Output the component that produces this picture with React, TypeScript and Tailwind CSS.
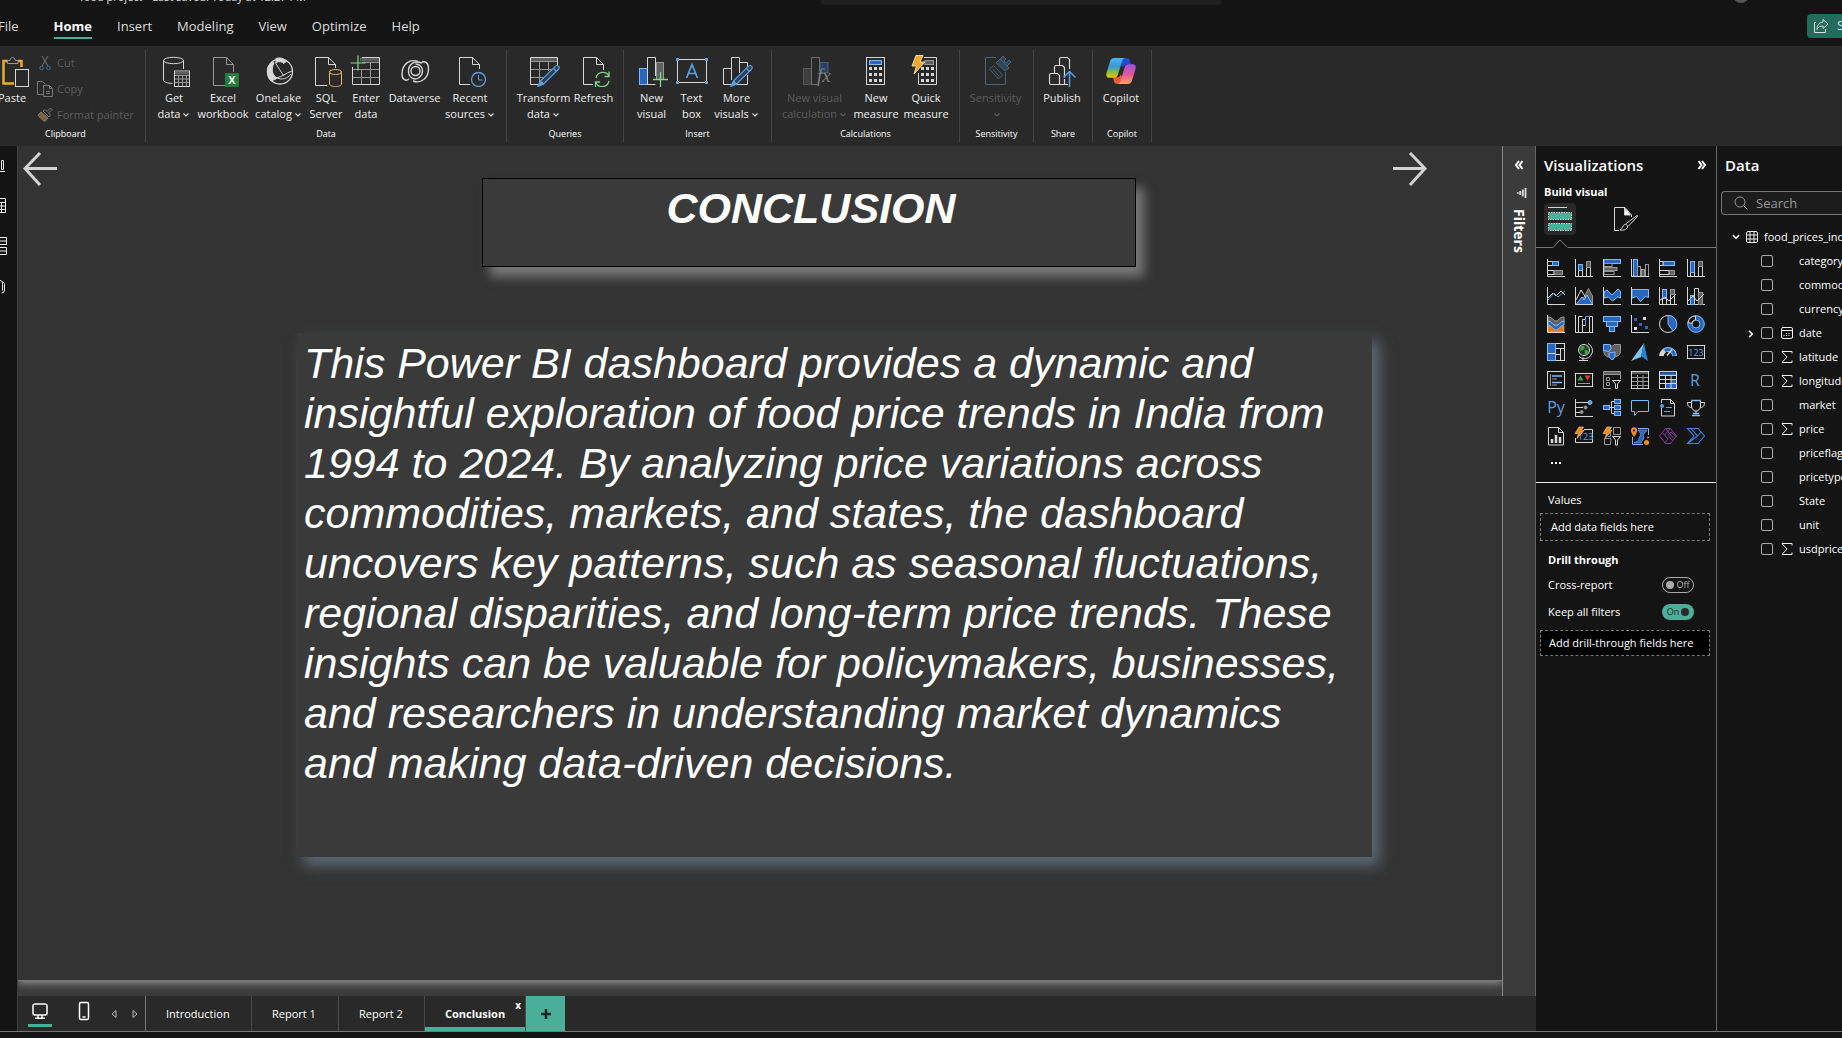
import type { ReactNode } from "react";

const W = "#d6d6d6";
const G = "#979797";
const DG = "#5f5f5f";
const B = "#2767c0";
const LB = "#7db9f2";
const SB = "#5a9fe0";
const BG = "#141414";

/* ---------- ribbon icons (32 x 32) ---------- */

function Icon32({ children, dim = false }: { children: ReactNode; dim?: boolean }) {
  return (
    <svg viewBox="0 0 32 32" fill="none" stroke={W} aria-hidden="true" className={dim ? "size-8 shrink-0 opacity-40" : "size-8 shrink-0"}>
      {children}
    </svg>
  );
}

function Pencil() {
  return (
    <g stroke={LB} strokeWidth="1.2">
      <path d="M12.5 26 27.5 11.2a2 2 0 0 1 3 0 2 2 0 0 1 0 3L15.5 29l-5.5 2z" fill="#29405c" stroke={SB} />
      <path d="m12.5 26 3 3-5 2z" fill={SB} stroke={SB} />
      <path d="m25.5 13.5 3 3" stroke={SB} />
    </g>
  );
}

function Keys({ x }: { x: number }) {
  return (
    <g fill={W} stroke="none">
      {[0, 1, 2].map((r) => [0, 1, 2].map((c) => <rect key={`${r}${c}`} x={x + c * 5} y={12 + r * 6} width="3" height="3" />))}
    </g>
  );
}

const ribbonIcons = {
  getData: (
    <Icon32>
      <ellipse cx="15.5" cy="5.5" rx="10" ry="3.2" />
      <path d="M5.5 5.5V25c0 2 4 3.3 9 3.5M25.5 5.5V14" />
      <rect x="16.5" y="16" width="15" height="15.5" />
      <path d="M17 18h14" stroke={DG} strokeWidth="3" />
      <path d="M17 20.500h14M17 24h14M17 27.500h14M20.500 20v11M24.500 20v11M28.500 20v11" stroke={G} />
    </Icon32>
  ),
  excel: (
    <Icon32>
      <path d="M18 30.500H6.500V2.500H19.500L26.500 9.500V17M19.500 2.500V9.500H26.500" stroke={G} />
      <rect x="18" y="18" width="14" height="14" fill="#217e3c" stroke="none" />
      <text x="25" y="29" fontSize="11" fontWeight="700" textAnchor="middle" fill="#fff" stroke="none">X</text>
    </Icon32>
  ),
  oneLake: (
    <Icon32>
      <circle cx="17" cy="16.500" r="12.500" strokeWidth="1.300" />
      <path d="M9 7C3 11 3 21 8 26c3-1 5-2 6-3-5-3-6-9-3-15zM13 3.500c4-1.500 8 0 10 3l-2 2c-2-2-5-2.500-8-1z" fill={W} />
      <path d="M12 7c3 5 6 10 9 14M14 23c5 2 10 1 14-4" />
      <path d="M13 23c6-1 10-5 16-7" />
    </Icon32>
  ),
  sql: (
    <Icon32>
      <path d="M17 30.500H5.500V2.500H18.500L25.500 9.500V13M18.500 2.500V9.500H25.500" />
      <g stroke="#f0b460" fill="#292929">
        <path d="M19.500 17V29c0 1.500 3 2.500 6 2.500s6-1 6-2.500V17" />
        <ellipse cx="25.500" cy="17" rx="6" ry="2.500" />
      </g>
    </Icon32>
  ),
  enterData: (
    <Icon32>
      <path d="M10 4.500h20" stroke={DG} strokeWidth="4" />
      <path d="M12 7.500h18M2 14.500h28M2 22.500h28M11.500 14v16M20.500 8v22" stroke={G} />
      <path d="M12 2.500H29.500V29.500H2.500V12" />
      <path d="M8 .5v15M.5 8h15" stroke="#7fd888" strokeWidth="1.200" />
    </Icon32>
  ),
  dataverse: (
    <Icon32>
      <g strokeWidth="1.400">
        <path d="M19 6.500C11 3.500 3 9 3 19c0 6 4 7.500 7 5" />
        <path d="M14 26c8 3 15.500-3 15.500-12 0-7-4-8.500-7.500-6" />
        <circle cx="16.500" cy="16" r="4.500" />
        <path d="M22.500 8C15 5 9 9.500 9.500 17c.5 6 6 8.500 10 6 3-2 4-4 4-7 0-4-3-7-7-7" />
      </g>
    </Icon32>
  ),
  recent: (
    <Icon32>
      <path d="M16 29.500H5.500V2.500H18.500L25.500 9.500V14M18.500 2.500V9.500H25.500" />
      <circle cx="24.500" cy="24.500" r="7" stroke={SB} strokeWidth="1.300" />
      <path d="M24.500 20v5h4" stroke={SB} />
    </Icon32>
  ),
  transform: (
    <Icon32>
      <path d="M2 4.500h28" stroke={DG} strokeWidth="4" />
      <path d="M2 6.500h28M2 14.500h25M2 22.500h14M11.500 7v20M20.500 7v9" stroke={G} />
      <path d="M29.500 10V2.500H2.500V29.500H11" />
      <Pencil />
    </Icon32>
  ),
  refresh: (
    <Icon32>
      <path d="M15 29.500H5.500V2.500H18.500L25.500 9.500V15M18.500 2.500V9.500H25.500" />
      <path d="M18 23a7 7 0 0 1 13-2M31 16.500V21.500H26.500M31 26a7 7 0 0 1-13 2M17.500 32V27H22" stroke="#7fd888" strokeWidth="1.300" />
    </Icon32>
  ),
  newVisual: (
    <Icon32>
      <rect x="3.500" y="13.500" width="8" height="16" fill={B} stroke={LB} />
      <rect x="20.500" y="7.500" width="7" height="17" fill={DG} stroke={G} />
      <path d="M19.500 29.500h-8v-27h8V21" />
      <path d="M24.500 17v15M17 24.500h15" stroke="#7fd888" strokeWidth="1.300" />
    </Icon32>
  ),
  textBox: (
    <Icon32>
      <rect x="1.500" y="4.500" width="29" height="23" />
      <path d="M10.500 23 16 9.500 21.500 23M12.500 18.500h7" stroke={SB} strokeWidth="1.700" />
      <g fill={SB} stroke="none">
        <rect x="0" y="3" width="3" height="3" />
        <rect x="29" y="3" width="3" height="3" />
        <rect x="0" y="26" width="3" height="3" />
        <rect x="29" y="26" width="3" height="3" />
      </g>
    </Icon32>
  ),
  moreVisuals: (
    <Icon32>
      <path d="M10 29.500H2.500V13.500h8M10.500 25V2.500h8V18M18.500 7.500h8V12M26.500 20v9.500H15" />
      <Pencil />
    </Icon32>
  ),
  newCalc: (
    <Icon32 dim>
      <rect x="4.500" y="13.500" width="8" height="16" fill={DG} stroke={G} />
      <rect x="21" y="7.500" width="8" height="10" fill={B} stroke={LB} />
      <path d="M18 29.500h-5.500v-27h8V16" />
      <text x="18" y="27" fontSize="19" fontStyle="italic" fill="#fff" stroke="none" className="font-['Liberation_Serif',serif]">fx</text>
    </Icon32>
  ),
  newMeasure: (
    <Icon32>
      <rect x="6.500" y="2.500" width="18" height="27" />
      <rect x="9.500" y="5.500" width="12" height="4" fill={B} stroke={LB} />
      <Keys x={9} />
    </Icon32>
  ),
  quickMeasure: (
    <Icon32>
      <path d="M14 2.500h12.500v27H8.500V18" />
      <rect x="15" y="5.500" width="8.500" height="4" fill={DG} stroke={G} />
      <Keys x={11} />
      <path d="M6 .5h7L10 7h5L4 19l2.500-8H2z" fill="#f0a830" stroke="#f8d9a0" />
    </Icon32>
  ),
  sensitivity: (
    <Icon32 dim>
      <g stroke="#7db9f2">
        <path d="M16 2.500H5.500v27h20V17" />
        <path d="m9.500 14 4-3.500 9 9.500-4 4zM12.500 14l7 7.500" />
        <path d="m16 8 4-4 9 9-4 3zM20 4l3-3 3 3-2 2 2 2 3-3 2 2-4 4" fill="#3f6c9a" />
      </g>
    </Icon32>
  ),
  publish: (
    <Icon32>
      <g strokeWidth="1.200">
        <path d="M22 29.500H5q-1.500 0-1.500-1.500v-8q0-1.500 1.500-1.500h6.500l2 2v9M8.500 18v-6q0-1.500 1.500-1.500h6.500l2 2v10M18.500 29.500V24M13.500 10V4q0-1.500 1.500-1.500h6.500l2 2V14" />
        <path d="M23.500 32V17M17.500 22.500l6-6 6 6" stroke={SB} strokeWidth="1.500" />
      </g>
    </Icon32>
  ),
  copilot: (
    <svg viewBox="0 0 32 32" className="size-8 shrink-0" aria-hidden="true">
      <defs>
        <linearGradient id="cpA" x1="0" y1="0" x2="0" y2="1">
          <stop offset="0" stopColor="#48b5f5" />
          <stop offset=".45" stopColor="#3a9ad0" />
          <stop offset=".7" stopColor="#7fc04a" />
          <stop offset="1" stopColor="#f5c400" />
        </linearGradient>
        <linearGradient id="cpB" x1="0" y1="0" x2="0" y2="1">
          <stop offset="0" stopColor="#a450ea" />
          <stop offset=".5" stopColor="#e0559c" />
          <stop offset="1" stopColor="#ffa060" />
        </linearGradient>
      </defs>
      <path d="M15 3h6.500c2 0 2.800 1 3.300 2.500L26 9.500h-4c-2.500 0-3.500 1-4 3L15 9z" fill="#1f4fd0" />
      <path d="M17 29h-4.500c-2 0-3-1-3.500-2.500L8 22.500h3c3 0 4-1 4.500-3l3 4z" fill="#ee5a3a" />
      <path d="M9 3h11c-2 .5-2.600 2-3.200 4l-4 13c-.7 2-1.800 2.800-4 2.800H4.500C1.500 22.800.8 20.500 1.500 18L5 6.500C5.700 4.300 7 3 9 3z" fill="url(#cpA)" />
      <path d="M23 29H12.500c2-.5 2.700-2 3.300-4l4-13c.6-2 1.700-2.800 4-2.800h3.700c3 0 3.700 2.300 3 4.800L27 25.500c-.7 2.200-2 3.500-4 3.500z" fill="url(#cpB)" />
    </svg>
  ),
};

/* ---------- visual gallery icons (18 x 18) ---------- */

const axis = <path d="M.5 0v17.500H18" />;
const bolt = <path d="M4 0h4.500L6.500 3.500H9L2 11.500 3.500 6.500H0z" fill="#f08a1c" stroke="#f9cf9a" strokeWidth=".6" />;

const gallery: [string, ReactNode][] = [
  ["Stacked bar chart", <>{axis}<path d="M1 2.500h4.500v4H1M1 11.500h6v4H1" /><rect x="5.500" y="2.500" width="6" height="4" fill={B} stroke={LB} /><rect x="7.500" y="11.500" width="8" height="4" fill={DG} stroke={G} /></>],
  ["Stacked column chart", <>{axis}<path d="M3.500 11v6M7.500 11v6M11.500 8v9M15.500 8v9" /><rect x="3.500" y="5.500" width="4" height="6" fill={B} stroke={LB} /><rect x="11.500" y="2.500" width="4" height="6" fill={DG} stroke={G} /></>],
  ["Clustered bar chart", <><rect x="1" y=".5" width="16.500" height="4" fill={B} stroke={LB} /><rect x="1" y="4.500" width="8" height="3" stroke={G} /><rect x="1" y="8.500" width="13" height="3" fill={DG} stroke={G} /><rect x="1" y="12.500" width="10" height="3" stroke={G} />{axis}</>],
  ["Clustered column chart", <><rect x="2.500" y=".5" width="4" height="17" fill={B} stroke={LB} /><rect x="6.500" y="7.500" width="3" height="10" stroke={G} /><rect x="10.500" y="10.500" width="3" height="7" fill={DG} stroke={G} /><rect x="14.500" y="5.500" width="3" height="12" stroke={G} />{axis}</>],
  ["100% stacked bar chart", <>{axis}<path d="M1 2.500h3v4H1M1 11.500h9v4H1" /><rect x="4.500" y="2.500" width="11" height="4" fill={B} stroke={LB} /><rect x="10.500" y="11.500" width="5" height="4" fill={DG} stroke={G} /></>],
  ["100% stacked column chart", <>{axis}<path d="M3.500 13v4M7.500 13v4M11.500 8v9M15.500 8v9" /><rect x="3.500" y="2.500" width="4" height="11" fill={B} stroke={LB} /><rect x="11.500" y="2.500" width="4" height="5" fill={DG} stroke={G} /></>],
  ["Line chart", <>{axis}<path d="m1 11 5-5 3 3 5-5 4 4" /><path d="m1 13 6-7 4 4 7-6" stroke={SB} /></>],
  ["Area chart", <><path d="M8 12 13.500 1.500 17.500 9v8" fill={DG} stroke={G} /><path d="m1 13 5-10 5 8" /><path d="M1 17.500 7 10l2 3 3-5 5.500 9.500z" fill={B} stroke={LB} />{axis}</>],
  ["Stacked area chart", <><path d="m1 5 3-2 5 5 6-6 2.500 2v7l-3-1-5 4-4-4L1 11z" fill={B} stroke={LB} />{axis}</>],
  ["100% stacked area chart", <><path d="M1 2.500h16.500v8l-3-1-5 5-4-5L1 11z" fill={B} stroke={LB} />{axis}</>],
  ["Line and stacked column chart", <>{axis}<path d="M3.500 9v8M7.500 9v8M11.500 8v9M15.500 8v9" /><rect x="3.500" y="2.500" width="4" height="9" fill={B} stroke={LB} /><rect x="11.500" y="2.500" width="4" height="5" fill={DG} stroke={G} /><path d="m1 13 5-3 4 4 7-7" /></>],
  ["Line and clustered column chart", <>{axis}<rect x="3.500" y="8.500" width="4" height="9" fill={B} stroke={LB} /><path d="M7.500 17V1.500h4V17" /><rect x="11.500" y="5.500" width="4" height="12" fill={DG} stroke={G} /><path d="m1 14 5-5 4 5 7-7" /></>],
  ["Ribbon chart", <><path d="M1 2c5 0 5 4 8 4s3-4 8-4v5c-4 0-5 3-8 3S5 7 1 7z" fill={DG} stroke={G} /><path d="M1 11c5 0 5 2 8 2s4-2 8-2v6H1z" fill="#e07b12" stroke="#f0b060" strokeWidth=".6" /><path d="M1 6c4 0 5 5 8 5s4-5 8-5v4c-4 0-5 5-8 5s-4-5-8-5z" fill={B} stroke={LB} />{axis}</>],
  ["Waterfall chart", <>{axis}<path d="M3.500 17V1.500h4M7.500 17V4.500h3v6h-3M14.500 17V1.500h3V17" /><path d="M10.500 11V1.500h4" stroke={SB} /></>],
  ["Funnel chart", <g fill={B} stroke={LB}><rect x=".5" y="1.500" width="17" height="5" /><rect x="3.500" y="6.500" width="11" height="5" /><rect x="6.500" y="11.500" width="5" height="5" /></g>],
  ["Scatter chart", <>{axis}<g stroke="none"><path d="M3 3h3v3H3zM8 8h3v3H8zM14 11h3v3h-3z" fill={B} /><path d="M12 2h3v3h-3zM3 12h3v3H3z" fill={W} /></g></>],
  ["Pie chart", <><circle cx="9" cy="9" r="8.500" /><path d="M9 .5A8.500 8.500 0 0 1 14 16L9 9z" fill={B} stroke={LB} /></>],
  ["Donut chart", <><circle cx="9" cy="9" r="6.300" stroke={B} strokeWidth="4" /><circle cx="9" cy="9" r="8.300" stroke={LB} /><circle cx="9" cy="9" r="4" stroke={LB} /><path d="M8.500 1A8 8 0 0 0 1 7.500l4 1C5 6.500 6.500 5 8.500 5z" fill={BG} /></>],
  ["Treemap", <><rect x=".5" y=".5" width="17" height="17" /><rect x=".5" y=".5" width="8" height="17" fill={B} stroke={LB} /><path d="M8.500 5.500h9M13.500 6v11M8.500 11.500h5M.5 10.500h8" /></>],
  ["Map", <><circle cx="9" cy="7" r="5.500" fill="#1b3b22" /><path d="M6 3c3 0 4 2 3 3s-3 1-4 2zM10 7l3 1-1 3-2 0zM11 3l2 2" fill="#3f9d4d" stroke="#3f9d4d" strokeWidth=".6" /><path d="M13 .5a8 8 0 1 1-9 13M8 14.500v3M4 17.500h9" /></>],
  ["Filled map", <><path d="M.5 1.500H7l2 2 2-2h6.500v6c0 5-3 6-5 6l-3 3.500-3-3C2 14 .5 10 .5 7z" fill={DG} stroke={G} /><path d="M.5 1.500H7l1 4-2 3-5.500-1zM9 17l-3-3 0-4 6-1 0 5z" fill={B} stroke={LB} /></>],
  ["Azure map", <g stroke="none"><path d="M13 0 0 18l10-4z" fill="#7fc8ec" /><path d="m13 0 4 18-7-5z" fill="#2a7fd0" /></g>],
  ["Gauge", <><path d="M2.500 13A6.500 6.500 0 0 1 15.500 13" stroke={W} strokeWidth="4.500" /><path d="M5 7.800A6.500 6.500 0 0 1 15.500 13" stroke={LB} strokeWidth="4.500" /><path d="M6 7.500A6.500 6.500 0 0 1 15.500 12.500" stroke={B} strokeWidth="2.800" /><path d="M8 12.500 13 6.500" stroke={W} strokeWidth="1.500" /></>],
  ["Card", <><rect x=".5" y="2.500" width="17" height="13" /><text x="9" y="12.500" fontSize="9" textAnchor="middle" fill={SB} stroke="none">123</text></>],
  ["Multi-row card", <><rect x=".5" y=".5" width="17" height="17" /><path d="M3.500 3v12" stroke={G} /><path d="M5 5h10M5 11.500h10" stroke={LB} strokeWidth="1.600" /><path d="M5 8h5M5 14h5" stroke={G} /></>],
  ["KPI", <><rect x=".5" y="2.500" width="17" height="13" /><path d="M3 12.500h12" stroke={G} /><path d="m2.500 9.500 3-5 3 5z" fill="#3f9d4d" stroke="none" /><path d="m9.500 4.500 3 5 3-5z" fill="#e03c31" stroke="none" /></>],
  ["Slicer", <><path d="M1 1.500h16" stroke={DG} strokeWidth="3" /><path d="M8 17.500H.5V.5h17V8M1 3.500h16" stroke={G} /><path d="M3.500 6.500h3v3h-3zM3.500 11.500h3v3h-3z" stroke={G} /><path d="M9.500 9.500h8l-3 3.500v4.500h-2V13z" fill={BG} /></>],
  ["Table", <><path d="M1 6.500h16M1 10.500h16M1 14.500h16M6.500 4v13M12 4v13" stroke={G} /><path d="M1 2h16" stroke={DG} strokeWidth="2" /><rect x=".5" y=".5" width="17" height="17" /></>],
  ["Matrix", <><path d="M1 3h16" stroke={B} strokeWidth="3" /><path d="M12 8h5v9H6v-5h6z" fill={B} stroke="none" /><path d="M1 4.500h16M1 8.500h16M1 12.500h16M6.500 4v13M12 4v13" /><rect x=".5" y=".5" width="17" height="17" /></>],
  ["R script visual", <text x="8" y="14.500" fontSize="16" fontWeight="500" textAnchor="middle" fill={SB} stroke="none">R</text>],
  ["Python visual", <text x="9" y="13.500" fontSize="16" textAnchor="middle" fill={SB} stroke="none">Py</text>],
  ["Key influencers", <>{axis}<path d="M1 3.500h12M1 8.500h7M1 13.500h4" /><circle cx="15" cy="3.500" r="2" fill={SB} stroke={LB} /><circle cx="10.500" cy="8.500" r="1.500" fill={G} stroke={G} /><circle cx="6.500" cy="13" r="1.500" fill={G} stroke={G} /></>],
  ["Decomposition tree", <><path d="M7 8.500h5M11 2.500H8.500v12H11" /><g fill={B} stroke={LB}><rect x=".5" y="6.500" width="6" height="4" /><rect x="11.500" y=".5" width="6" height="4" /><rect x="11.500" y="6.500" width="6" height="4" /><rect x="11.500" y="12.500" width="6" height="4" /></g></>],
  ["Q&A", <path d="M.5 1.500h17v11H7L3.500 16.500v-4h-3z" stroke={LB} />],
  ["Narrative", <><path d="M2.500 4V.5h9l4 4v12.500h-13V9M11.500.5v4h4" /><circle cx="3" cy="7" r="2" fill={SB} stroke="none" /><path d="M7 8.500h6M5 12.500h6" stroke={SB} /></>],
  ["Metrics", <><path d="M4.500 1v6c0 3 2 5 4.500 5s4.500-2 4.500-5V1M4.500 3.500h-4c0 4 2 5 4.500 5M13.500 3.500h4c0 4-2 5-4.500 5M9 12v3" /><path d="M4 1.500h10M5 16.500h8M6 14.500h6" stroke={LB} strokeWidth="1.500" /></>],
  ["Paginated report", <><path d="M1.500.5h10l5 5v12.500h-15zM11.500.5v5h5" /><path d="M5 16v-4M9 16V8M13 16v-6" strokeWidth="2.500" /></>],
  ["Card (new)", <><path d="M9 2.500h8.500v13H.5V11" /><text x="10.500" y="13" fontSize="9" textAnchor="middle" fill={SB} stroke="none">123</text>{bolt}</>],
  ["Slicer (new)", <><path d="M10.500.5h7v7h-7zM8 11.500H1.500v6h6z" stroke={G} /><path d="M5 9.500h2.500v-4" stroke={SB} /><path d="M9.500 9.500h8l-3 3.500v5h-2v-5z" fill={BG} />{bolt}</>],
  ["ArcGIS Maps", <><path d="M7 1.500h10.500V8M12 17.500H1.500V10" stroke={LB} /><path d="M7 3h9l-4 5 1 3-3 5H3c2-2 5-1 5-5l2-4z" fill={B} stroke={LB} strokeWidth=".6" /><path d="M3 .2C.5.200 0 2 0 3.500 0 6 3 10 3 10s3.200-4 3.200-6.500C6.200 2 5.500.200 3 .200z" fill="#f08a1c" stroke="none" /><circle cx="3" cy="3.500" r="1" fill={BG} stroke="none" /><circle cx="15.500" cy="15.500" r="2.500" fill="#f08a1c" stroke="none" /><circle cx="17" cy="10.500" r="1" fill="#f08a1c" stroke="none" /></>],
  ["Power Apps", <g stroke="#8d3aa0"><path d="M6.500 1.500h5L17.500 9l-6 7.500h-5L.5 9zM3.500 5.500 9 12l-3.500 4M11.500 1.500 5.500 8M6.500 1.500l8 10M17 9.500 12 5 9 8.500l4.500 5" /></g>],
  ["Power Automate", <g stroke="#3b84ea" strokeWidth="1.100"><path d="M.5 1.500H11L17.500 9 11 16.500H.5L7 9zM4 1.500 10.500 9 .5 16.500M10.500 9 14 5" /></g>],
];

/* ---------- shared parts ---------- */

function Chevron({ className = "" }: { className?: string }) {
  return (
    <svg viewBox="0 0 8 8" className={"inline-block size-2 " + className} fill="none" stroke="currentColor" strokeWidth="1.200" aria-hidden="true">
      <path d="M1.500 2.500 4 5l2.500-2.500" />
    </svg>
  );
}

type Cmd = { icon: ReactNode; lines: string[]; arrow?: boolean; w: string; dim?: boolean };

function RibbonGroup({ name, width, cmds }: { name: string; width: string; cmds: Cmd[] }) {
  return (
    <section aria-label={name} className={"my-1 flex shrink-0 flex-col border-r border-[#444] " + width}>
      <div className="mt-[5px] flex h-[67px] justify-center pr-0.5">
        {cmds.map((c) => (
          <button key={c.lines.join(" ")} disabled={c.dim} className={"flex flex-col items-center whitespace-nowrap text-[11px] leading-4 " + c.w + (c.dim ? " text-[#5c5c5c]" : " text-[#eee]")}>
            {c.icon}
            <span className="mt-[3px]">{c.lines[0]}</span>
            <span>
              {c.lines[1]}
              {c.arrow && <Chevron className="ml-0.5" />}
            </span>
          </button>
        ))}
      </div>
      <h2 className="mt-1 text-center text-[9px] leading-4 text-white">{name}</h2>
    </section>
  );
}

function Ribbon() {
  const i = ribbonIcons;
  return (
    <div className="flex h-[100px] overflow-hidden bg-[#292929]">
      <section aria-label="Clipboard" className="my-1 flex w-[146px] shrink-0 flex-col border-r border-[#444]">
        <div className="mt-[5px] flex h-[67px]">
          <button className="flex w-[37px] flex-col items-start text-[11px] leading-4 text-[#eee]">
            <svg viewBox="0 0 32 32" className="size-8" fill="none" aria-hidden="true">
              <path d="M8 6H3.500v22.500H14M18 6h3.500v6" stroke="#f0a830" strokeWidth="2.500" />
              <path d="M7.500 8.500v-3H10c0-4 5-4 5 0h3v3z" stroke={G} fill="#292929" />
              <rect x="15.500" y="14.500" width="13" height="17" stroke={W} fill="#292929" />
            </svg>
            <span className="-ml-0.5 mt-[3px]">Paste</span>
          </button>
          <div className="flex flex-col text-[11px] leading-4 text-[#5c5c5c]">
            <button disabled className="flex h-[26px] shrink-0 items-start gap-1">
              <svg viewBox="0 0 16 16" className="size-4" fill="none" aria-hidden="true">
                <path d="m5 1 6 10M11 1 5 11" stroke="#777" />
                <circle cx="4.500" cy="13" r="1.800" stroke="#3f6c9a" />
                <circle cx="11.500" cy="13" r="1.800" stroke="#3f6c9a" />
              </svg>
              Cut
            </button>
            <button disabled className="flex h-[26px] shrink-0 items-start gap-1">
              <svg viewBox="0 0 16 16" className="size-4" fill="none" stroke="#777" aria-hidden="true">
                <path d="M6 13.500H.5V.5h5l3 3" />
                <path d="M6.500 4.500h6l3 3v8h-9zM12.500 4.500v3h3M9 10.500h4M9 12.500h4" />
              </svg>
              Copy
            </button>
            <button disabled className="flex h-[26px] shrink-0 items-start gap-1 whitespace-nowrap">
              <svg viewBox="0 0 16 16" className="size-4" fill="none" stroke="#777" aria-hidden="true">
                <path d="m1 8 3-3 7 6-3 3.500C5 13 3 11 1 8z" fill="#7d6434" />
                <path d="m6 4 6 6 1.500-2-2-2L15 2.500l-1.500-1.500L10 4.500l-2-2z" />
              </svg>
              Format painter
            </button>
          </div>
        </div>
        <h2 className="mt-1 pl-[45px] text-[9px] leading-4 text-white">Clipboard</h2>
      </section>
      <RibbonGroup name="Data" width="w-[361px]" cmds={[
        { icon: i.getData, lines: ["Get", "data"], arrow: true, w: "w-[46px]" },
        { icon: i.excel, lines: ["Excel", "workbook"], w: "w-[52px]" },
        { icon: i.oneLake, lines: ["OneLake", "catalog"], arrow: true, w: "w-[59px]" },
        { icon: i.sql, lines: ["SQL", "Server"], w: "w-[36px]" },
        { icon: i.enterData, lines: ["Enter", "data"], w: "w-[44px]" },
        { icon: i.dataverse, lines: ["Dataverse"], w: "w-[53px]" },
        { icon: i.recent, lines: ["Recent", "sources"], arrow: true, w: "w-[58px]" },
      ]} />
      <RibbonGroup name="Queries" width="w-[117px]" cmds={[
        { icon: i.transform, lines: ["Transform", "data"], arrow: true, w: "w-[59px]" },
        { icon: i.refresh, lines: ["Refresh"], w: "w-[41px]" },
      ]} />
      <RibbonGroup name="Insert" width="w-[148px]" cmds={[
        { icon: i.newVisual, lines: ["New", "visual"], w: "w-[40px]" },
        { icon: i.textBox, lines: ["Text", "box"], w: "w-[40px]" },
        { icon: i.moreVisuals, lines: ["More", "visuals"], arrow: true, w: "w-[50px]" },
      ]} />
      <RibbonGroup name="Calculations" width="w-[188px]" cmds={[
        { icon: i.newCalc, lines: ["New visual", "calculation"], arrow: true, w: "w-[70px]", dim: true },
        { icon: i.newMeasure, lines: ["New", "measure"], w: "w-[53px]" },
        { icon: i.quickMeasure, lines: ["Quick", "measure"], w: "w-[47px]" },
      ]} />
      <RibbonGroup name="Sensitivity" width="w-[74px]" cmds={[{ icon: i.sensitivity, lines: ["Sensitivity", ""], arrow: true, w: "w-[60px]", dim: true }]} />
      <RibbonGroup name="Share" width="w-[59px]" cmds={[{ icon: i.publish, lines: ["Publish"], w: "w-[50px]" }]} />
      <RibbonGroup name="Copilot" width="w-[59px]" cmds={[{ icon: i.copilot, lines: ["Copilot"], w: "w-[50px]" }]} />
    </div>
  );
}

function TopBar() {
  const tabs = ["File", "Home", "Insert", "Modeling", "View", "Optimize", "Help"];
  return (
    <header>
      <div className="flex h-[5px] items-end justify-between overflow-hidden pl-20 pr-[93px] text-[11px] leading-4 text-[#ddd]">
        <span className="w-[741px] shrink-0 whitespace-nowrap">food project • Last saved: Today at 12:27 PM</span>
        <span className="h-4 w-[400px] shrink-0 rounded-sm bg-[#1f1f1f]" />
        <span className="mb-0.5 ml-auto size-4 rounded-full bg-[#555]" />
      </div>
      <div className="flex h-[41px] items-start justify-between">
        <nav className="flex gap-[25px] pt-2.5 text-[13px] leading-[22px] text-[#ddd]">
          {tabs.map((t) => (
            <a key={t} href="#" className={t === "Home" ? "border-b-2 border-[#4bae98] font-bold text-white" : t === "File" ? "-ml-0.5 mr-2.5" : ""}>
              {t}
            </a>
          ))}
        </nav>
        <button className="mt-[9px] flex h-6 w-[35px] items-center gap-2 overflow-hidden rounded-l bg-[#236b5c] pl-1.5 text-[13px] text-[#ddd]">
          <svg viewBox="0 0 16 16" className="size-4 shrink-0" fill="none" stroke="currentColor" aria-hidden="true">
            <path d="M3 4.500H1.500v10h11V11" />
            <path d="M10 1.500 15 6l-5 4.500V8C7 8 5 9 4 11.500c0-4 2-7 6-7.500z" />
          </svg>
          Share
        </button>
      </div>
    </header>
  );
}

function Rail() {
  const views: [string, ReactNode][] = [
    ["Report view", <path d="M1.500 2.500h2v9h-2zM0 13.500h5" />],
    ["Table view", <path d="M0 1.500h5.500v14H0M0 5.500h5M0 9h5M0 12.500h5M1.500 5v10" />],
    ["Model view", <path d="M0 1.500h6.500v7H0M0 5h6M0 11.500h6.500v7H0M0 15h6" />],
    ["DAX query view", <path d="M0 5.500c2 0 2.500 1.500 2.500 4v6M2 7c2.500 0 2.500 2 2.500 4v4q0 3-3 3" />],
  ];
  return (
    <nav aria-label="Views" className="flex w-[18px] shrink-0 flex-col gap-5 border-r border-[#3f3f3f] bg-[#141414] pt-3">
      {views.map(([n, d]) => (
        <button key={n} aria-label={n} className="h-[19px] w-3">
          <svg viewBox="0 0 12 19" className="h-[19px] w-3" fill="none" stroke="#eee">
            {d}
          </svg>
        </button>
      ))}
    </nav>
  );
}

function Arrow({ flip = false }: { flip?: boolean }) {
  return (
    <button aria-label={flip ? "Next page" : "Previous page"} className="h-[34px] w-[34px]">
      <svg viewBox="0 0 34 34" className={flip ? "size-full -scale-x-100" : "size-full"} fill="none" stroke="#d4d2d0" strokeWidth="3">
        <path d="M17 1 2 16.500 17 33M2 16.500h32" />
      </svg>
    </button>
  );
}

function Canvas() {
  return (
    <main className="flex min-w-0 grow flex-col overflow-hidden bg-[#3b3b3b] pb-[15px] font-['Liberation_Sans',Arial,sans-serif]">
      <div className="grow border-b border-[#777] bg-[#333] pt-1.5 shadow-[0_2px_8px_#999]">
        <div className="grid grid-cols-[34px_425fr_654fr_257fr_34px] pl-[5px] pr-[75px]">
          <Arrow />
          <span />
          <h1 className="mt-[26px] h-[89px] border border-black bg-[#3a3a3a] pl-1 pt-1 text-center text-[43px] font-bold italic leading-[50px] text-white shadow-[8px_10px_10px_#777]">
            CONCLUSION
          </h1>
          <span />
          <Arrow flip />
        </div>
        <div className="mt-[66px] grid grid-cols-[279fr_1075fr_130fr]">
          <p className="col-start-2 h-[524px] bg-[#3a3a3a] pl-[7px] pr-5 pt-[5px] text-[43px] italic leading-[50px] text-white shadow-[7px_8px_14px_#606d79]">
            This Power BI dashboard provides a dynamic and insightful exploration of food price trends in India from 1994 to 2024. By analyzing price variations across commodities, markets, and states, the dashboard uncovers key patterns, such as seasonal fluctuations, regional disparities, and long-term price trends. These insights can be valuable for policymakers, businesses, and researchers in understanding market dynamics and making data-driven decisions.
          </p>
        </div>
      </div>
    </main>
  );
}

function FiltersPane() {
  return (
    <aside className="flex w-[34px] shrink-0 flex-col items-center border-x border-[#8a8a8a] border-r-[#666] bg-[#3b3b3b] text-white">
      <button aria-label="Expand filters" className="mt-3.5 h-[10px]">
        <svg viewBox="0 0 10 10" className="size-[10px]" fill="none" stroke="currentColor" strokeWidth="2">
          <path d="M5 1 2 5l3 4M8.500 1l-3 4 3 4" />
        </svg>
      </button>
      <svg viewBox="0 0 10 10" className="ml-1.5 mt-[18px] size-[10px]" fill="none" stroke="#ddd" strokeWidth="1.800" aria-hidden="true">
        <path d="M8.500 0v10M5.800 1.500v7M3.200 3v4M.8 4.200v1.600" />
      </svg>
      <h2 className="mt-[11px] text-sm font-bold leading-4 [writing-mode:vertical-rl]">Filters</h2>
    </aside>
  );
}

function Toggle({ label, on }: { label: string; on: boolean }) {
  return (
    <label className="flex h-[27px] items-center justify-between pl-3 pr-[22px]">
      {label}
      <input type="checkbox" role="switch" defaultChecked={on} className="sr-only" />
      <span className={"flex h-4 w-8 items-center justify-center gap-0.5 rounded-full text-[9px] " + (on ? "bg-[#4bae98] text-[#222]" : "border border-[#aaa] text-[#aaa]")}>
        {on && "On"}
        <span className={"size-2 rounded-full " + (on ? "bg-[#292929]" : "bg-[#aaa]")} />
        {!on && "Off"}
      </span>
    </label>
  );
}

function Visualizations() {
  return (
    <aside className="flex w-[181px] shrink-0 flex-col border-r border-[#666] bg-[#141414] text-[11px] leading-4 text-white">
      <div className="flex items-center justify-between pl-2 pr-[9px] pt-2">
        <h2 className="text-[15px] font-semibold leading-[22px]">Visualizations</h2>
        <button aria-label="Collapse pane">
          <svg viewBox="0 0 10 10" className="size-[10px]" fill="none" stroke="currentColor" strokeWidth="2">
            <path d="m1.500 1 3 4-3 4M5 1l3 4-3 4" />
          </svg>
        </button>
      </div>
      <h3 className="mt-2 pl-2 font-bold">Build visual</h3>
      <div className="mt-[3px] flex gap-[34px] pl-2">
        <button aria-label="Build visual" className="flex size-8 items-center justify-center rounded-sm bg-[#292929]">
          <svg viewBox="0 0 24 24" className="size-6" fill="none">
            <path d="M0 .5h19" stroke={W} />
            <rect x=".5" y="5.500" width="23" height="7" fill="#4bae98" stroke="#ddd" strokeDasharray="1.500 1" />
            <rect x=".5" y="16.500" width="23" height="7" fill="#4bae98" stroke="#ddd" strokeDasharray="1.500 1" />
          </svg>
        </button>
        <button aria-label="Format visual" className="flex size-8 items-center justify-center">
          <svg viewBox="0 0 24 24" className="size-6" fill="none" stroke={W}>
            <path d="M5 23.500H.5V.5H11L17.500 8v2" />
            <path d="M10.500 1v7h6z" fill="#fff" />
            <path d="M6 23c2-1 2-2 3-4s4-2 4.500 0c.5 3-4 5-7.500 4zM11.500 17 23 8.500c1 0 .5 1 0 1.500L14 19.500" />
          </svg>
        </button>
      </div>
      <svg viewBox="0 0 180 9" className="mt-1 h-[9px] w-full" fill="none" stroke="#777" aria-hidden="true">
        <path d="M0 8.500h17L24 1l7.500 7.500H181" />
      </svg>
      <div className="mt-1.5 grid grid-cols-[repeat(6,28px)] pl-1.5">
        {gallery.map(([name, art]) => (
          <button key={name} aria-label={name} title={name} className="flex size-7 items-center justify-center">
            <svg viewBox="0 0 18 18" className="size-[18px] overflow-visible" fill="none" stroke={W}>
              {art}
            </svg>
          </button>
        ))}
      </div>
      <button aria-label="More visuals" className="ml-[15px] mt-3 flex h-[3px] w-4 gap-0.5">
        <span className="size-0.5 bg-white" />
        <span className="size-0.5 bg-white" />
        <span className="size-0.5 bg-white" />
      </button>
      <h3 className="mt-[17px] border-t border-[#eee] pl-3 pt-[9px]">Values</h3>
      <div className="ml-1 mr-1.5 mt-[5px] flex h-7 items-center border border-dashed border-[#777] pl-2.5">Add data fields here</div>
      <h3 className="mt-[11px] pl-3 font-bold">Drill through</h3>
      <div className="mt-[3px]">
        <Toggle label="Cross-report" on={false} />
        <Toggle label="Keep all filters" on />
      </div>
      <div className="ml-1 mr-1.5 mt-[5px] flex h-[26px] items-center whitespace-nowrap border border-dashed border-[#777] bg-black pl-2">Add drill-through fields here</div>
    </aside>
  );
}

function Sigma() {
  return (
    <svg viewBox="0 0 12 12" className="size-3" fill="none" stroke="#eee" aria-hidden="true">
      <path d="M11 2.500v-2H1L6 6l-5 5.500h10v-2" />
    </svg>
  );
}

function DataPane() {
  const fields: [string, "sum" | "date" | ""][] = [
    ["category", ""], ["commodity", ""], ["currency", ""], ["date", "date"], ["latitude", "sum"], ["longitude", "sum"], ["market", ""],
    ["price", "sum"], ["priceflag", ""], ["pricetype", ""], ["State", ""], ["unit", ""], ["usdprice", "sum"],
  ];
  return (
    <aside className="w-[125px] shrink-0 overflow-hidden bg-[#141414] text-[11px] leading-4 text-white">
      <h2 className="pl-2 pt-2 text-[15px] font-semibold leading-[22px]">Data</h2>
      <label className="ml-1 mt-[15px] flex h-6 items-center gap-2 rounded-l border border-r-0 border-[#777] bg-[#1c1c1c] pl-3">
        <svg viewBox="0 0 14 14" className="size-3.5 shrink-0" fill="none" stroke="#999" aria-hidden="true">
          <circle cx="6" cy="6" r="5" />
          <path d="m9.500 9.500 4 4" />
        </svg>
        <input aria-label="Search" placeholder="Search" className="min-w-0 grow bg-transparent text-[13px] outline-none placeholder:text-[#999]" />
      </label>
      <div className="mt-2.5 flex h-6 items-center whitespace-nowrap pl-[15px]">
        <Chevron className="shrink-0 scale-125" />
        <svg viewBox="0 0 12 12" className="ml-1.5 size-3 shrink-0" fill="none" stroke="#eee" aria-hidden="true">
          <rect x=".5" y=".5" width="11" height="11" rx="1.500" />
          <path d="M.5 4h11M.5 8h11M4 .5v11M8 .5v11" />
        </svg>
        <span className="ml-1.5">food_prices_india</span>
      </div>
      <ul>
        {fields.map(([name, kind]) => (
          <li key={name} className="flex h-6 items-center whitespace-nowrap pl-[30px]">
            <span className="w-3.5 shrink-0">{kind === "date" && <Chevron className="-rotate-90 scale-125" />}</span>
            <label className="flex items-center">
              <input type="checkbox" className="size-3 shrink-0 appearance-none rounded-xs border border-[#aaa]" />
              <span className="ml-2 w-[18px] shrink-0">
                {kind === "sum" && <Sigma />}
                {kind === "date" && (
                  <svg viewBox="0 0 12 12" className="size-3" fill="none" stroke="#eee" aria-hidden="true">
                    <rect x=".5" y=".5" width="11" height="11" rx="1.500" />
                    <path d="M.5 3.500h11M5 6.500h1M7.500 6.500h1M2.500 8.500h1M5 8.500h1M7.500 8.500h1" />
                  </svg>
                )}
              </span>
              {name}
            </label>
          </li>
        ))}
      </ul>
    </aside>
  );
}

function PageTabs() {
  const base = "flex items-center border-r border-[#4a4a4a] pl-5 pt-0.5 text-left ";
  return (
    <footer className="flex h-[35px] bg-[#292929] text-[11px] text-white">
      <div className="flex w-[128px] shrink-0 border-r border-[#777]">
        <button aria-label="Desktop layout" className="ml-2.5 flex h-[31px] w-6 justify-center border-b-[3px] border-[#4bae98] pt-1.5">
          <svg viewBox="0 0 16 18" className="h-[18px] w-4" fill="none" stroke="#fff" strokeWidth="1.500">
            <rect x="1" y="2" width="14" height="11" rx="2" />
            <path d="M6 13v3M10 13v3M3 16.300h10" />
          </svg>
        </button>
        <button aria-label="Mobile layout" className="ml-[26px] flex h-[31px] pt-[5px]">
          <svg viewBox="0 0 12 20" className="h-5 w-3" fill="none" stroke="#fff" strokeWidth="1.500">
            <rect x="1.500" y="1.500" width="9" height="17" rx="1.500" />
            <path d="M4.500 16h3" />
          </svg>
        </button>
        <button aria-label="Previous tabs" className="ml-[21px]">
          <svg viewBox="0 0 6 8" className="h-2 w-1.5" fill="none" stroke="#bbb">
            <path d="M5 .5v7L1 4z" />
          </svg>
        </button>
        <button aria-label="Next tabs" className="ml-[15px]">
          <svg viewBox="0 0 6 8" className="h-2 w-1.5" fill="none" stroke="#bbb">
            <path d="M1 .5v7L5 4z" />
          </svg>
        </button>
      </div>
      <button className={base + "w-[106px]"}>Introduction</button>
      <button className={base + "w-[87px]"}>Report 1</button>
      <button className={base + "w-[86px]"}>Report 2</button>
      <div className="relative flex w-[101px] border-r border-[#4a4a4a]">
        <button className="grow border-b-4 border-[#4bae98] pl-5 pt-1.5 text-left font-bold">Conclusion</button>
        <button aria-label="Delete page" className="absolute right-1 top-[3px] text-[10px] font-bold leading-3">x</button>
      </div>
      <button aria-label="New page" className="flex w-[39px] items-center justify-center bg-[#4bae98]">
        <svg viewBox="0 0 12 12" className="size-3" stroke="#222" strokeWidth="2.500">
          <path d="M6 1v10M1 6h10" />
        </svg>
      </button>
    </footer>
  );
}

export default function App() {
  return (
    <div className="flex h-screen flex-col overflow-hidden bg-[#141414] font-['Open_Sans',sans-serif]">
      <TopBar />
      <Ribbon />
      <div className="flex min-h-0 grow border-b border-[#777]">
        <Rail />
        <div className="flex min-w-0 grow flex-col">
          <div className="flex min-h-0 grow">
            <Canvas />
            <FiltersPane />
          </div>
          <PageTabs />
        </div>
        <Visualizations />
        <DataPane />
      </div>
      <div className="h-1.5" />
    </div>
  );
}
